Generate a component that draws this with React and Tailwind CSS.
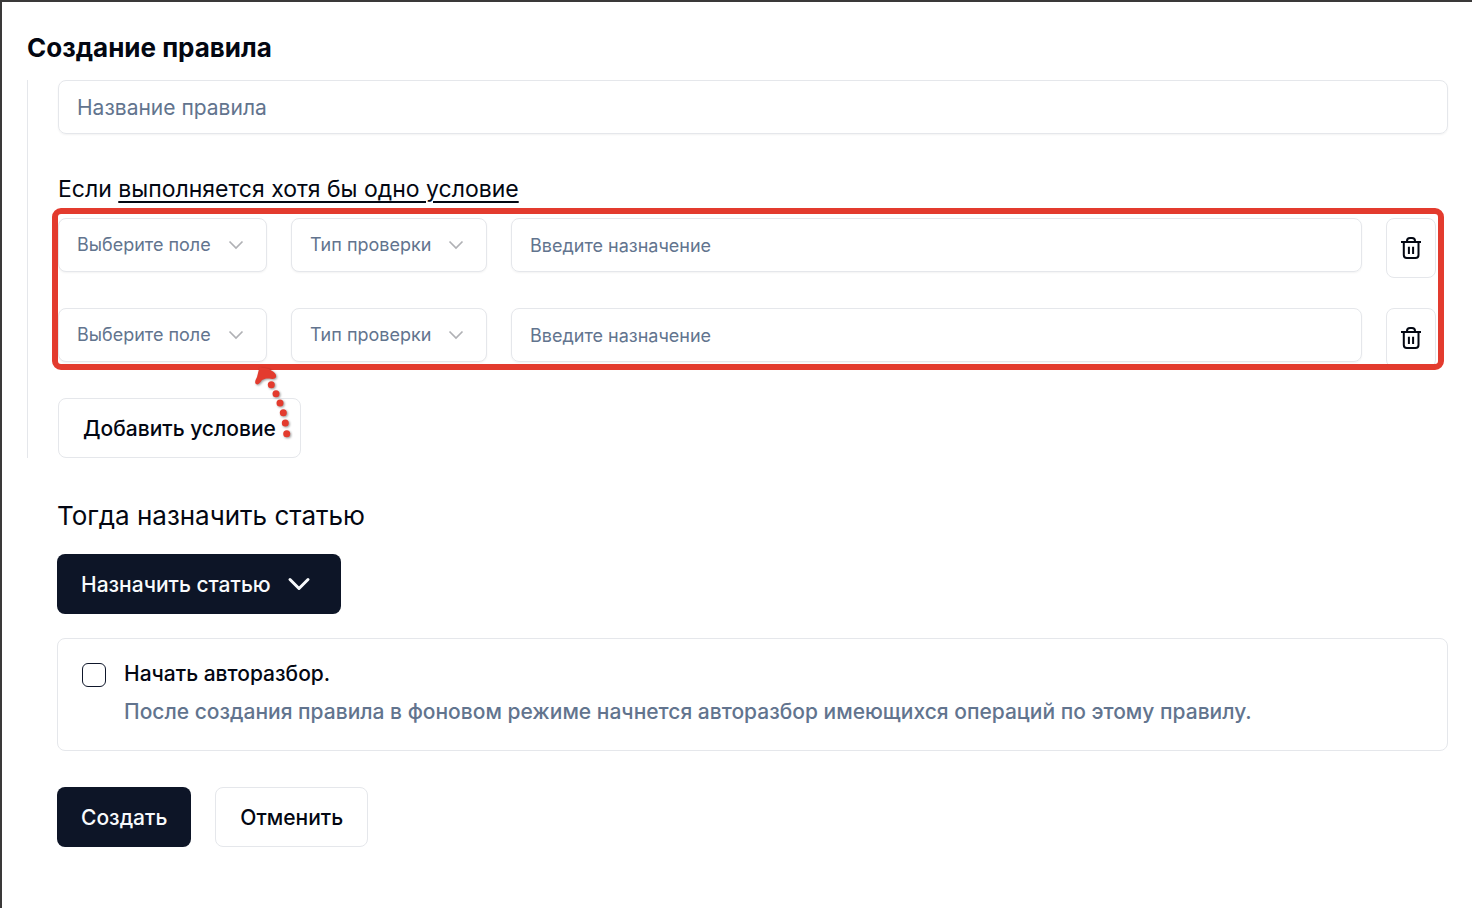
import React from "react";

const outlineButton = "h-[60px] rounded-lg border border-gray-200 bg-white px-6 pt-0.5 text-[21px] font-medium text-gray-950";
const primaryButton = "h-[60px] rounded-lg bg-[#0d1527] px-6 pt-0.5 text-[21px] font-medium text-slate-50";

function TrashIcon() {
  return (
    <svg width="24" height="24" viewBox="0 0 24 24" fill="none" stroke="currentColor" strokeWidth="2" aria-hidden="true">
      <path d="M2 6h20" />
      <path d="M8 6V5a3 3 0 0 1 3-3h2a3 3 0 0 1 3 3v1" />
      <path d="M4.800 6v13a3 3 0 0 0 3 3h8.700a3 3 0 0 0 3-3V6" />
      <path d="M9.900 10.700v7.300M14.100 10.700v7.300" />
    </svg>
  );
}

function SelectField({ label, className }) {
  return (
    <div className={`relative ${className}`}>
      <select
        aria-label={label}
        defaultValue=""
        className="block h-[54px] w-full appearance-none rounded-lg border border-gray-200 bg-white pb-0.5 pl-[18px] pr-12 text-[18px] text-slate-500 shadow-xs"
      >
        <option value="">{label}</option>
      </select>
      <svg className="pointer-events-none absolute right-[23px] top-5 text-[#b0b1b5]" width="16" height="14" viewBox="0 0 16 14" fill="none" stroke="currentColor" strokeWidth="1.700" aria-hidden="true">
        <path d="M1.500 3.500 8 10 14.500 3.500" />
      </svg>
    </div>
  );
}

function ConditionRow() {
  return (
    <div className="flex items-start gap-6 pr-3">
      <SelectField label="Выберите поле" className="w-[209px] shrink-0" />
      <SelectField label="Тип проверки" className="w-[196px] shrink-0" />
      <input
        type="text"
        aria-label="Введите назначение"
        placeholder="Введите назначение"
        className="h-[54px] min-w-0 flex-1 rounded-lg border border-gray-200 px-[18px] text-[18px] shadow-xs placeholder:text-slate-500"
      />
      <button type="button" aria-label="Удалить условие" className="flex h-[60px] w-[50px] shrink-0 items-center justify-center rounded-lg border border-gray-200 bg-white">
        <TrashIcon />
      </button>
    </div>
  );
}

// dotted pointer with a hand-drawn head
function PointerArrow() {
  const dots = [[21.3, 20.7], [26, 29.7], [30, 39], [33.3, 48.7], [35.3, 59], [36.7, 69.7]];
  return (
    <svg className="pointer-events-none absolute left-48 top-[146px] z-10 text-[#e33b2e] drop-shadow-[1px_1px_1px_rgba(0,0,0,0.4)]" width="50" height="80" viewBox="0 0 50 80" fill="currentColor" aria-hidden="true">
      <path d="M9.500 3 18 4.500C22 7 27 9 26 13 24.500 16 21 14.500 16 14.500L12 16C10 19 8 21.500 6 20 4 18.500 6 15 7 13Z" />
      {dots.map(([x, y]) => (
        <circle key={y} cx={x} cy={y} r="3.500" />
      ))}
    </svg>
  );
}

export default function App() {
  return (
    <main className="min-h-screen border-l-2 border-t-2 border-[#3a3939] bg-white pb-12 pl-[25px] pr-6 pt-[30px] font-['Inter',sans-serif] text-gray-950">
      <h1 className="text-[26px] font-bold leading-8">Создание правила</h1>

      <section className="mt-4 border-l border-gray-200 pl-[30px]">
        <input
          type="text"
          aria-label="Название правила"
          placeholder="Название правила"
          className="block h-[54px] w-full rounded-lg border border-gray-200 px-[18px] text-[21px] shadow-xs placeholder:text-slate-500"
        />

        <p className="mt-[39px] text-[23px] leading-8">
          Если{" "}
          <button type="button" className="underline decoration-2 underline-offset-4">выполняется хотя бы одно условие</button>
        </p>

        <div className="relative mt-[13px] flex flex-col gap-[30px]">
          <ConditionRow />
          <ConditionRow />
          <div className="pointer-events-none absolute -bottom-0.5 -left-1.5 -top-2.5 right-1 rounded-[9px] border-6 border-[#e33b2e]" />
          <PointerArrow />
        </div>

        <button type="button" className={`mt-[30px] ${outlineButton}`}>Добавить условие</button>
      </section>

      <div className="pl-[30px]">
        <h2 className="mt-10 text-[26px] leading-9">Тогда назначить статью</h2>
        <button type="button" className={`mt-5 flex items-center gap-[13px] ${primaryButton}`}>
          Назначить статью
          <svg width="33" height="30" viewBox="0 0 33 30" fill="none" stroke="currentColor" strokeWidth="3" strokeLinecap="round" strokeLinejoin="round" aria-hidden="true">
            <path d="M6 9.500 15 18.500 24 9.500" />
          </svg>
        </button>

        <div className="mt-6 flex gap-[18px] rounded-lg border border-gray-200 p-6">
          <input id="auto" type="checkbox" aria-describedby="auto-hint" className="size-6 shrink-0 appearance-none rounded-md border border-slate-900 checked:bg-slate-900" />
          <div className="text-[21px] font-medium">
            <label htmlFor="auto" className="block leading-[22px]">Начать авторазбор.</label>
            <p id="auto-hint" className="mt-[13px] leading-7 text-slate-500">
              После создания правила в фоновом режиме начнется авторазбор имеющихся операций по этому правилу.
            </p>
          </div>
        </div>

        <div className="mt-9 flex gap-6">
          <button type="submit" className={primaryButton}>Создать</button>
          <button type="button" className={outlineButton}>Отменить</button>
        </div>
      </div>
    </main>
  );
}
